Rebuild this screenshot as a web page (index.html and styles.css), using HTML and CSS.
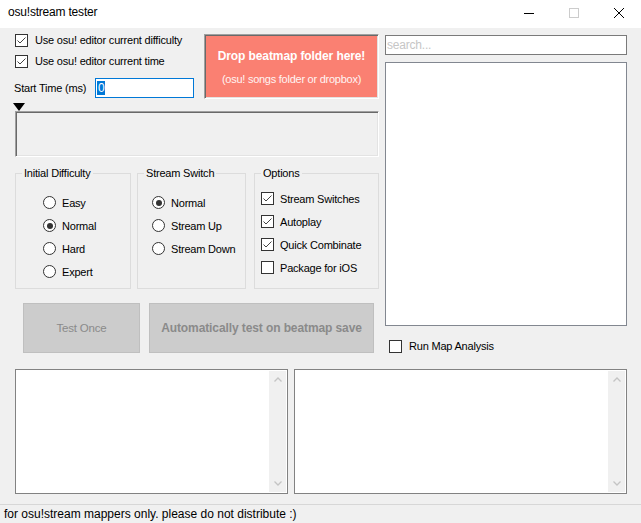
FILE: index.html
```html
<!DOCTYPE html>
<html>
<head>
<meta charset="utf-8">
<title>osu!stream tester</title>
<link rel="stylesheet" href="styles.css">
</head>
<body>
<div class="window">
  <div class="titlebar">
    <span class="title">osu!stream tester</span>
    <div class="wctl">
      <span class="wbtn"><svg width="10" height="10" viewBox="0 0 10 10"><line x1="0" y1="5.5" x2="10" y2="5.5" stroke="#000" stroke-width="1"/></svg></span>
      <span class="wbtn"><svg width="10" height="10" viewBox="0 0 10 10"><rect x="0.5" y="0.5" width="9" height="9" fill="none" stroke="#cccccc" stroke-width="1"/></svg></span>
      <span class="wbtn"><svg width="10" height="10" viewBox="0 0 10 10"><path d="M0 0L10 10M10 0L0 10" stroke="#000" stroke-width="1"/></svg></span>
    </div>
  </div>

  <div class="client">
    <div class="cols">
      <div class="leftcol">
        <div class="top">
          <div class="opts">
            <div class="chk"><span class="box"><svg width="11" height="11" viewBox="0 0 11 11"><polyline points="1.5,5.5 4,8 9.5,2.5" fill="none" stroke="#444" stroke-width="1"/></svg></span><span>Use osu! editor current difficulty</span></div>
            <div class="chk chk2"><span class="box"><svg width="11" height="11" viewBox="0 0 11 11"><polyline points="1.5,5.5 4,8 9.5,2.5" fill="none" stroke="#444" stroke-width="1"/></svg></span><span>Use osu! editor current time</span></div>
            <div class="start">
              <span class="start-label">Start Time (ms)</span>
              <div class="textbox"><span class="sel">0</span></div>
            </div>
          </div>
          <div class="drop">
            <div class="drop-title">Drop beatmap folder here!</div>
            <div class="drop-sub">(osu! songs folder or dropbox)</div>
          </div>
        </div>

        <div class="marker"></div>
        <div class="panel"></div>

        <div class="groups">
          <fieldset class="grp grp-diff">
            <legend>Initial Difficulty</legend>
            <div class="items items-radio">
              <div class="item"><span class="radio"></span><span>Easy</span></div>
              <div class="item"><span class="radio on"></span><span>Normal</span></div>
              <div class="item"><span class="radio"></span><span>Hard</span></div>
              <div class="item"><span class="radio"></span><span>Expert</span></div>
            </div>
          </fieldset>
          <fieldset class="grp grp-switch">
            <legend>Stream Switch</legend>
            <div class="items items-radio items-switch">
              <div class="item"><span class="radio on"></span><span>Normal</span></div>
              <div class="item"><span class="radio"></span><span>Stream Up</span></div>
              <div class="item"><span class="radio"></span><span>Stream Down</span></div>
            </div>
          </fieldset>
          <fieldset class="grp grp-opts">
            <legend>Options</legend>
            <div class="items items-check">
              <div class="item"><span class="box"><svg width="11" height="11" viewBox="0 0 11 11"><polyline points="1.5,5.5 4,8 9.5,2.5" fill="none" stroke="#444" stroke-width="1"/></svg></span><span>Stream Switches</span></div>
              <div class="item"><span class="box"><svg width="11" height="11" viewBox="0 0 11 11"><polyline points="1.5,5.5 4,8 9.5,2.5" fill="none" stroke="#444" stroke-width="1"/></svg></span><span>Autoplay</span></div>
              <div class="item"><span class="box"><svg width="11" height="11" viewBox="0 0 11 11"><polyline points="1.5,5.5 4,8 9.5,2.5" fill="none" stroke="#444" stroke-width="1"/></svg></span><span>Quick Combinate</span></div>
              <div class="item"><span class="box"></span><span>Package for iOS</span></div>
            </div>
          </fieldset>
        </div>

        <div class="buttons">
          <div class="btn btn-once">Test Once</div>
          <div class="btn btn-auto">Automatically test on beatmap save</div>
        </div>
      </div>

      <div class="rightcol">
        <div class="search">search...</div>
        <div class="listbox"></div>
        <div class="chk runmap"><span class="box"></span><span>Run Map Analysis</span></div>
      </div>
    </div>

    <div class="bottom">
      <div class="ta ta-left">
        <div class="vscroll">
          <span class="arrow"><svg width="8" height="5" viewBox="0 0 8 5"><polyline points="0.5,4.5 4,1 7.5,4.5" fill="none" stroke="#c4c4c4" stroke-width="1.3"/></svg></span>
          <span class="arrow"><svg width="8" height="5" viewBox="0 0 8 5"><polyline points="0.5,0.5 4,4 7.5,0.5" fill="none" stroke="#c4c4c4" stroke-width="1.3"/></svg></span>
        </div>
      </div>
      <div class="ta ta-right">
        <div class="vscroll">
          <span class="arrow"><svg width="8" height="5" viewBox="0 0 8 5"><polyline points="0.5,4.5 4,1 7.5,4.5" fill="none" stroke="#c4c4c4" stroke-width="1.3"/></svg></span>
          <span class="arrow"><svg width="8" height="5" viewBox="0 0 8 5"><polyline points="0.5,0.5 4,4 7.5,0.5" fill="none" stroke="#c4c4c4" stroke-width="1.3"/></svg></span>
        </div>
      </div>
    </div>
  </div>

  <div class="status">for osu!stream mappers only. please do not distribute :)</div>
</div>
</body>
</html>
```

FILE: styles.css
```css
html, body {
  margin: 0;
  padding: 0;
}
body {
  width: 641px;
  height: 523px;
  overflow: hidden;
  background: #f0f0f0;
  font-family: "Liberation Sans", Arial, sans-serif;
  font-size: 11px;
  letter-spacing: -0.2px;
  color: #000;
}
.window {
  display: flex;
  flex-direction: column;
  height: 523px;
}

/* title bar */
.titlebar {
  height: 28px;
  background: #fff;
  display: flex;
  align-items: flex-start;
  flex: none;
}
.title {
  font-size: 12px;
  line-height: 25px;
  padding-left: 8px;
}
.wctl {
  margin-left: auto;
  display: flex;
}
.wbtn {
  width: 45px;
  height: 25px;
  display: flex;
  align-items: center;
  justify-content: center;
}
.wbtn svg { display: block; }

/* client */
.client {
  flex: 1;
  background: #f0f0f0;
}
.cols {
  display: flex;
  padding-left: 12px;
  gap: 6px;
}
.leftcol {
  width: 367px;
  flex: none;
}
.rightcol {
  width: 242px;
  flex: none;
}

/* checkboxes */
.chk {
  display: flex;
  align-items: center;
  height: 13px;
  gap: 7px;
  line-height: 13px;
  white-space: nowrap;
}
.box {
  width: 13px;
  height: 13px;
  box-sizing: border-box;
  border: 1px solid #333;
  background: #fff;
  display: flex;
  align-items: center;
  justify-content: center;
  flex: none;
}
.box svg { display: block; }

.top {
  margin-top: 6px;
  display: flex;
  height: 65px;
}
.opts {
  width: 192px;
  flex: none;
  display: flex;
  flex-direction: column;
}
.opts .chk { margin-left: 3px; }
.opts .chk2 { margin-top: 8px; }
.start {
  margin-top: 10px;
  height: 20px;
  display: flex;
  align-items: center;
}
.start-label {
  margin-left: 2px;
  width: 81px;
  flex: none;
}
.textbox {
  width: 99px;
  height: 20px;
  box-sizing: border-box;
  border: 1px solid #0078d7;
  background: #fff;
  display: flex;
  align-items: center;
}
.sel {
  margin-left: 1px;
  background: #0078d7;
  color: #fff;
  font-size: 12px;
  line-height: 14px;
  padding: 0 1px;
}

.drop {
  width: 175px;
  height: 65px;
  box-sizing: border-box;
  background: #fa8072;
  border-top: 1px solid #a0a0a0;
  border-left: 1px solid #a0a0a0;
  border-right: 1px solid #fff;
  border-bottom: 1px solid #fff;
  box-shadow: inset 1px 1px 0 #696969, inset -1px -1px 0 #e3e3e3;
  color: #fff;
  text-align: center;
}
.drop-title {
  font-weight: bold;
  font-size: 12px;
  letter-spacing: -0.1px;
  line-height: 14px;
  margin-top: 14px;
}
.drop-sub {
  color: #fff4f2;
  line-height: 13px;
  margin-top: 10px;
  letter-spacing: -0.25px;
}

.marker {
  margin-top: 4px;
  margin-left: 1px;
  width: 0;
  height: 0;
  border-left: 6px solid transparent;
  border-right: 6px solid transparent;
  border-top: 8px solid #000;
}
.panel {
  margin-left: 3px;
  width: 364px;
  height: 46px;
  box-sizing: border-box;
  border-top: 1px solid #a0a0a0;
  border-left: 1px solid #a0a0a0;
  border-right: 1px solid #fff;
  border-bottom: 1px solid #fff;
  box-shadow: inset 1px 1px 0 #696969, inset -1px -1px 0 #e3e3e3;
  background: #f0f0f0;
}

/* group boxes */
.groups {
  margin-top: 10px;
  margin-left: 3px;
  display: flex;
}
.grp {
  box-sizing: border-box;
  margin: 0;
  height: 122px;
  border: 1px solid #dcdcdc;
  padding: 0 0 0 6px;
  min-width: 0;
}
.grp legend {
  padding: 0 2px;
  line-height: 13px;
  font-size: 11px;
}
.grp-diff { width: 116px; }
.grp-switch { width: 109px; margin-left: 6px; }
.grp-opts { width: 125px; margin-left: 8px; }

.items {
  display: flex;
  flex-direction: column;
}
.item {
  height: 23px;
  display: flex;
  align-items: center;
  white-space: nowrap;
}
.items-radio { margin-top: 11px; margin-left: 21px; }
.items-radio .item { gap: 6px; }
.items-switch { margin-left: 8px; }
.items-check { margin-top: 7px; margin-left: 0; }
.items-check .item { gap: 6px; }

.radio {
  width: 13px;
  height: 13px;
  box-sizing: border-box;
  border: 1px solid #333;
  border-radius: 50%;
  background: #fff;
  display: flex;
  align-items: center;
  justify-content: center;
  flex: none;
}
.radio.on::after {
  content: "";
  width: 6px;
  height: 6px;
  border-radius: 50%;
  background: #333;
}

/* buttons */
.buttons {
  margin-top: 14px;
  margin-left: 11px;
  display: flex;
  gap: 9px;
}
.btn {
  height: 50px;
  box-sizing: border-box;
  background: #cccccc;
  border: 1px solid #bfbfbf;
  color: #8a8a8a;
  display: flex;
  align-items: center;
  justify-content: center;
  white-space: nowrap;
}
.btn-once { width: 117px; font-size: 11.5px; }
.btn-auto {
  width: 225px;
  font-weight: bold;
  font-size: 12px;
  letter-spacing: -0.1px;
}

/* right column */
.search {
  margin-top: 7px;
  height: 20px;
  box-sizing: border-box;
  border: 1px solid #7a7a7a;
  background: #fff;
  color: #c6c6c6;
  font-size: 12px;
  line-height: 18px;
  padding-left: 1px;
}
.listbox {
  margin-top: 7px;
  height: 264px;
  box-sizing: border-box;
  border: 1px solid #828790;
  background: #fff;
}
.runmap {
  margin-top: 14px;
  margin-left: 4px;
}

/* bottom text areas */
.bottom {
  margin-top: 16px;
  padding-left: 15px;
  display: flex;
  gap: 6px;
}
.ta {
  height: 125px;
  box-sizing: border-box;
  border: 1px solid #828282;
  background: #fff;
  padding: 1px;
  display: flex;
  justify-content: flex-end;
}
.ta-left { width: 273px; }
.ta-right { width: 333px; }
.vscroll {
  width: 17px;
  background: #f0f0f0;
  display: flex;
  flex-direction: column;
  justify-content: space-between;
}
.arrow {
  height: 17px;
  display: flex;
  align-items: center;
  justify-content: center;
}
.arrow svg { display: block; }

/* status bar */
.status {
  flex: none;
  height: 19px;
  box-sizing: border-box;
  border-top: 1px solid #d7d7d7;
  font-size: 12px;
  line-height: 18px;
  padding-left: 4px;
  letter-spacing: 0;
  white-space: nowrap;
}
```
